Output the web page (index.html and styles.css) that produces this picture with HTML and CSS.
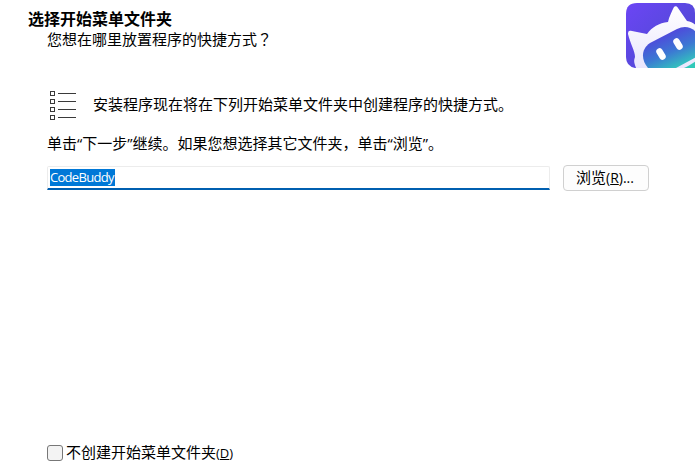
FILE: index.html
```html
<!DOCTYPE html>
<html lang="zh-CN">

<head>
	<meta charset="UTF-8">
	<title>CodeBuddy</title>
	<link rel="stylesheet" href="styles.css">
</head>

<body>
	<header class="header">
		<div class="heading">
			<h1>选择开始菜单文件夹</h1>
			<p>您想在哪里放置程序的快捷方式<span class="question" lang="zh-TW">？</span></p>
		</div>
		<svg class="logo" viewBox="0 0 69 65">
			<defs>
				<linearGradient id="bg" x1="0" y1="0" x2="1" y2="1">
					<stop offset="0" stop-color="#6c45f5"/>
					<stop offset=".5" stop-color="#5948df"/>
					<stop offset="1" stop-color="#4942ce"/>
				</linearGradient>
				<linearGradient id="face" x1="40" y1="29" x2="56" y2="66" gradientUnits="userSpaceOnUse">
					<stop offset="0" stop-color="#5046dc"/>
					<stop offset=".5" stop-color="#3c78d3"/>
					<stop offset="1" stop-color="#31d0ba"/>
				</linearGradient>
				<linearGradient id="fur" x1="0" y1="0" x2="0" y2="1">
					<stop offset="0" stop-color="#fff"/>
					<stop offset="1" stop-color="#eae6fd"/>
				</linearGradient>
				<clipPath id="frame"><path d="M11 0H59Q69 0 69 10V65H9Q0 63 0 54V11Q0 0 11 0Z"/></clipPath>
			</defs>
			<g clip-path="url(#frame)">
				<rect width="69" height="65" fill="url(#bg)"/>
				<path d="M10 65C9 61 7 59 9 54C9 48 4 40 2 31C2 28 3 27 6 28L21 31C26 24 33 20 42 19C43 14 46 8 48 4C49 3 51 3 52 5L61 18C66 19 69 21 72 24V65Z" fill="url(#fur)"/>
				<path d="M22 65C15 57 15 46 24 40L51 26C59 22 66 24 72 31V53L50 65Z" fill="url(#face)"/>
				<path d="M58 65C62 63 66 61 70 58V65Z" fill="#31c9b9"/>
				<path d="M33.500 48.500L36.500 53.500M50.500 38.500L53.500 43.500" stroke="#fff" stroke-width="6.500" stroke-linecap="round"/>
			</g>
		</svg>
	</header>

	<main class="page">
		<div class="intro">
			<svg class="list-icon" viewBox="0 0 27 30" shape-rendering="crispEdges">
				<path d="M.5 1.500h4v4h-4zM.5 9.500h4v4h-4zM.5 17.500h4v4h-4zM.5 25.500h4v4h-4zM8 3.500h18M8 11.500h18M8 19.500h18M8 27.500h18"/>
			</svg>
			<p>安装程序现在将在下列开始菜单文件夹中创建程序的快捷方式。</p>
		</div>
		<p class="hint">单击“下一步”继续。如果您想选择其它文件夹，单击“浏览”。</p>
		<div class="folder">
			<div class="folder-input"><span class="selected">CodeBuddy</span></div>
			<button class="browse">浏览<span class="key">(<u>R</u>)...</span></button>
		</div>
	</main>

	<label class="no-folder">
		<input type="checkbox">
		<span>不创建开始菜单文件夹<span class="key">(<u>D</u>)</span></span>
	</label>
</body>

</html>
```
FILE: styles.css
```css
* {
	box-sizing: border-box;
}

body {
	margin: 0;
	height: 474px;
	display: flex;
	flex-direction: column;
	overflow: hidden;
	background: #fff;
	color: #000;
	font: 15px/20px "Open Sans", "Noto Sans CJK SC", sans-serif;
}

h1,
p {
	margin: 0;
	white-space: nowrap;
}

.header {
	display: flex;
	justify-content: space-between;
	height: 88px;
	padding: 3px 0 0 28px;
}

.heading {
	padding-top: 6px;
}

.heading h1 {
	font-size: 16px;
	line-height: 20px;
}

.heading p {
	padding-left: 19px;
}

.question {
	font-family: "Noto Sans CJK TC", sans-serif;
	line-height: 1;
}

.logo {
	width: 69px;
	height: 65px;
}

.page {
	padding-left: 47px;
}

.intro {
	display: flex;
	align-items: center;
	gap: 16px;
	height: 34px;
	padding-left: 3px;
}

.intro p {
	padding-bottom: 2px;
}

.list-icon {
	width: 27px;
	height: 30px;
	fill: none;
	stroke: #3a3a3a;
}

.hint {
	margin-top: 11px;
}

.folder {
	display: flex;
	align-items: center;
	gap: 13px;
	margin-top: 12px;
}

.folder-input {
	width: 503px;
	height: 24px;
	padding: 2px;
	border: 1px solid #ececec;
	border-bottom: 2px solid #005fb0;
	border-radius: 2px 2px 0 0;
	font-size: 13px;
	line-height: 16px;
	letter-spacing: -.7px;
}

.selected {
	display: inline-block;
	height: 17px;
	padding-right: 1px;
	background: #0078d7;
	color: #fff;
}

.browse {
	width: 86px;
	height: 26px;
	padding: 0 2px 2px 0;
	border: 1px solid #d0d0d0;
	border-radius: 4px;
	background: #fdfdfd;
	color: #000;
	font: inherit;
}

.key {
	font-size: 13px;
}

.browse .key {
	font-size: 14px;
}

.no-folder {
	display: flex;
	align-items: center;
	gap: 3px;
	margin: auto 0 11px 47px;
}

.no-folder input {
	appearance: none;
	width: 16px;
	height: 16px;
	margin: 0;
	border: 1px solid #777;
	border-radius: 3px;
	background: #f3f3f3;
}
```
